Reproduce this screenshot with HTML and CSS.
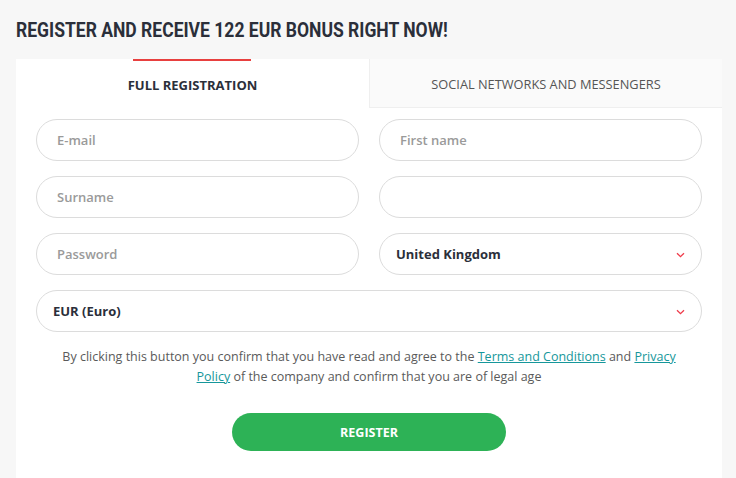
FILE: index.html
```html
<!DOCTYPE html>
<html>
<head>
<meta charset="utf-8">
<link rel="stylesheet" href="styles.css">
</head>
<body>
<div class="page">
  <h1 class="title"><span class="title-text">REGISTER AND RECEIVE 122 EUR BONUS RIGHT NOW!</span></h1>
  <div class="card">
    <div class="tabs">
      <div class="tab tab-active">FULL REGISTRATION</div>
      <div class="tab tab-other">SOCIAL NETWORKS AND MESSENGERS</div>
    </div>
    <form class="form">
      <div class="grid">
        <div class="field"><span class="ph">E-mail</span></div>
        <div class="field"><span class="ph">First name</span></div>
        <div class="field"><span class="ph">Surname</span></div>
        <div class="field"></div>
        <div class="field"><span class="ph">Password</span></div>
        <div class="field select"><span class="val">United Kingdom</span>
          <svg class="chev" width="9" height="6" viewBox="0 0 9 6"><path d="M1 1.2 L4.5 4.6 L8 1.2" fill="none" stroke="#ef3b4a" stroke-width="1.3"/></svg>
        </div>
        <div class="field select wide currency"><span class="val">EUR (Euro)</span>
          <svg class="chev" width="9" height="6" viewBox="0 0 9 6"><path d="M1 1.2 L4.5 4.6 L8 1.2" fill="none" stroke="#ef3b4a" stroke-width="1.3"/></svg>
        </div>
      </div>
      <p class="terms">By clicking this button you confirm that you have read and agree to the <a href="#">Terms and Conditions</a> and <a href="#">Privacy Policy</a> of the company and confirm that you are of legal age</p>
      <div class="actions"><button type="button" class="btn">REGISTER</button></div>
    </form>
  </div>
</div>
</body>
</html>
```
FILE: styles.css
```css
* { box-sizing: border-box; }
html, body { margin: 0; padding: 0; }
body {
  background: #f7f7f7;
  font-family: "Open Sans", "Liberation Sans", sans-serif;
  color: #333;
  width: 736px;
  height: 478px;
  overflow: hidden;
}
.page { padding: 0 14px 0 16px; }
.title {
  margin: 0;
  height: 59px;
  padding-top: 18px;
  font-family: Roboto, "Liberation Sans", sans-serif;
  font-weight: 700;
  font-size: 20px;
  line-height: 24px;
  color: #2b2f3a;
  white-space: nowrap;
}
.title-text {
  display: inline-block;
  transform: scaleX(0.876);
  transform-origin: left center;
}
.card {
  background: #fff;
  width: 706px;
  height: 419px;
}
.tabs { display: flex; height: 49px; }
.tab {
  flex: 1 1 0;
  display: flex;
  align-items: center;
  justify-content: center;
  padding-top: 2px;
}
.tab-active {
  position: relative;
  font-weight: 700;
  font-size: 13px;
  color: #2b2f3a;
  flex-basis: 353px;
  flex-grow: 0;
}
.tab-active::before {
  content: "";
  position: absolute;
  top: 0;
  left: 117px;
  width: 118px;
  height: 2px;
  background: #e8403f;
}
.tab-other {
  background: #fafafa;
  border-left: 1px solid #efefef;
  border-bottom: 1px solid #efefef;
  color: #555;
  font-weight: 400;
  font-size: 12.8px;
}
.form { padding: 11px 20px 0 20px; }
.grid {
  display: grid;
  grid-template-columns: 1fr 1fr;
  column-gap: 20px;
  row-gap: 15px;
}
.field {
  height: 42px;
  border: 1px solid #dcdcdc;
  border-radius: 21px;
  display: flex;
  align-items: center;
  padding: 0 20px;
  font-size: 13px;
}
.ph { color: #9a9a9a; font-weight: 600; }
.select { padding-left: 16px; padding-right: 16px; justify-content: space-between; }
.val { color: #2b2f3a; font-weight: 700; }
.wide { grid-column: 1 / 3; }
.chev { display: block; margin-top: 1px; }
.terms {
  margin: 15px 0 0;
  padding: 0 22px;
  text-align: center;
  font-size: 12.5px;
  line-height: 20px;
  color: #5a5a5a;
  font-weight: 400;
}
.terms a { color: #16979b; text-decoration: underline; }
.actions { display: flex; justify-content: center; margin-top: 26px; }
.btn {
  width: 274px;
  height: 38px;
  border: 0;
  border-radius: 19px;
  background: #2db256;
  color: #fff;
  font-family: "Open Sans", "Liberation Sans", sans-serif;
  font-weight: 700;
  font-size: 12.5px;
  cursor: pointer;
}
```
